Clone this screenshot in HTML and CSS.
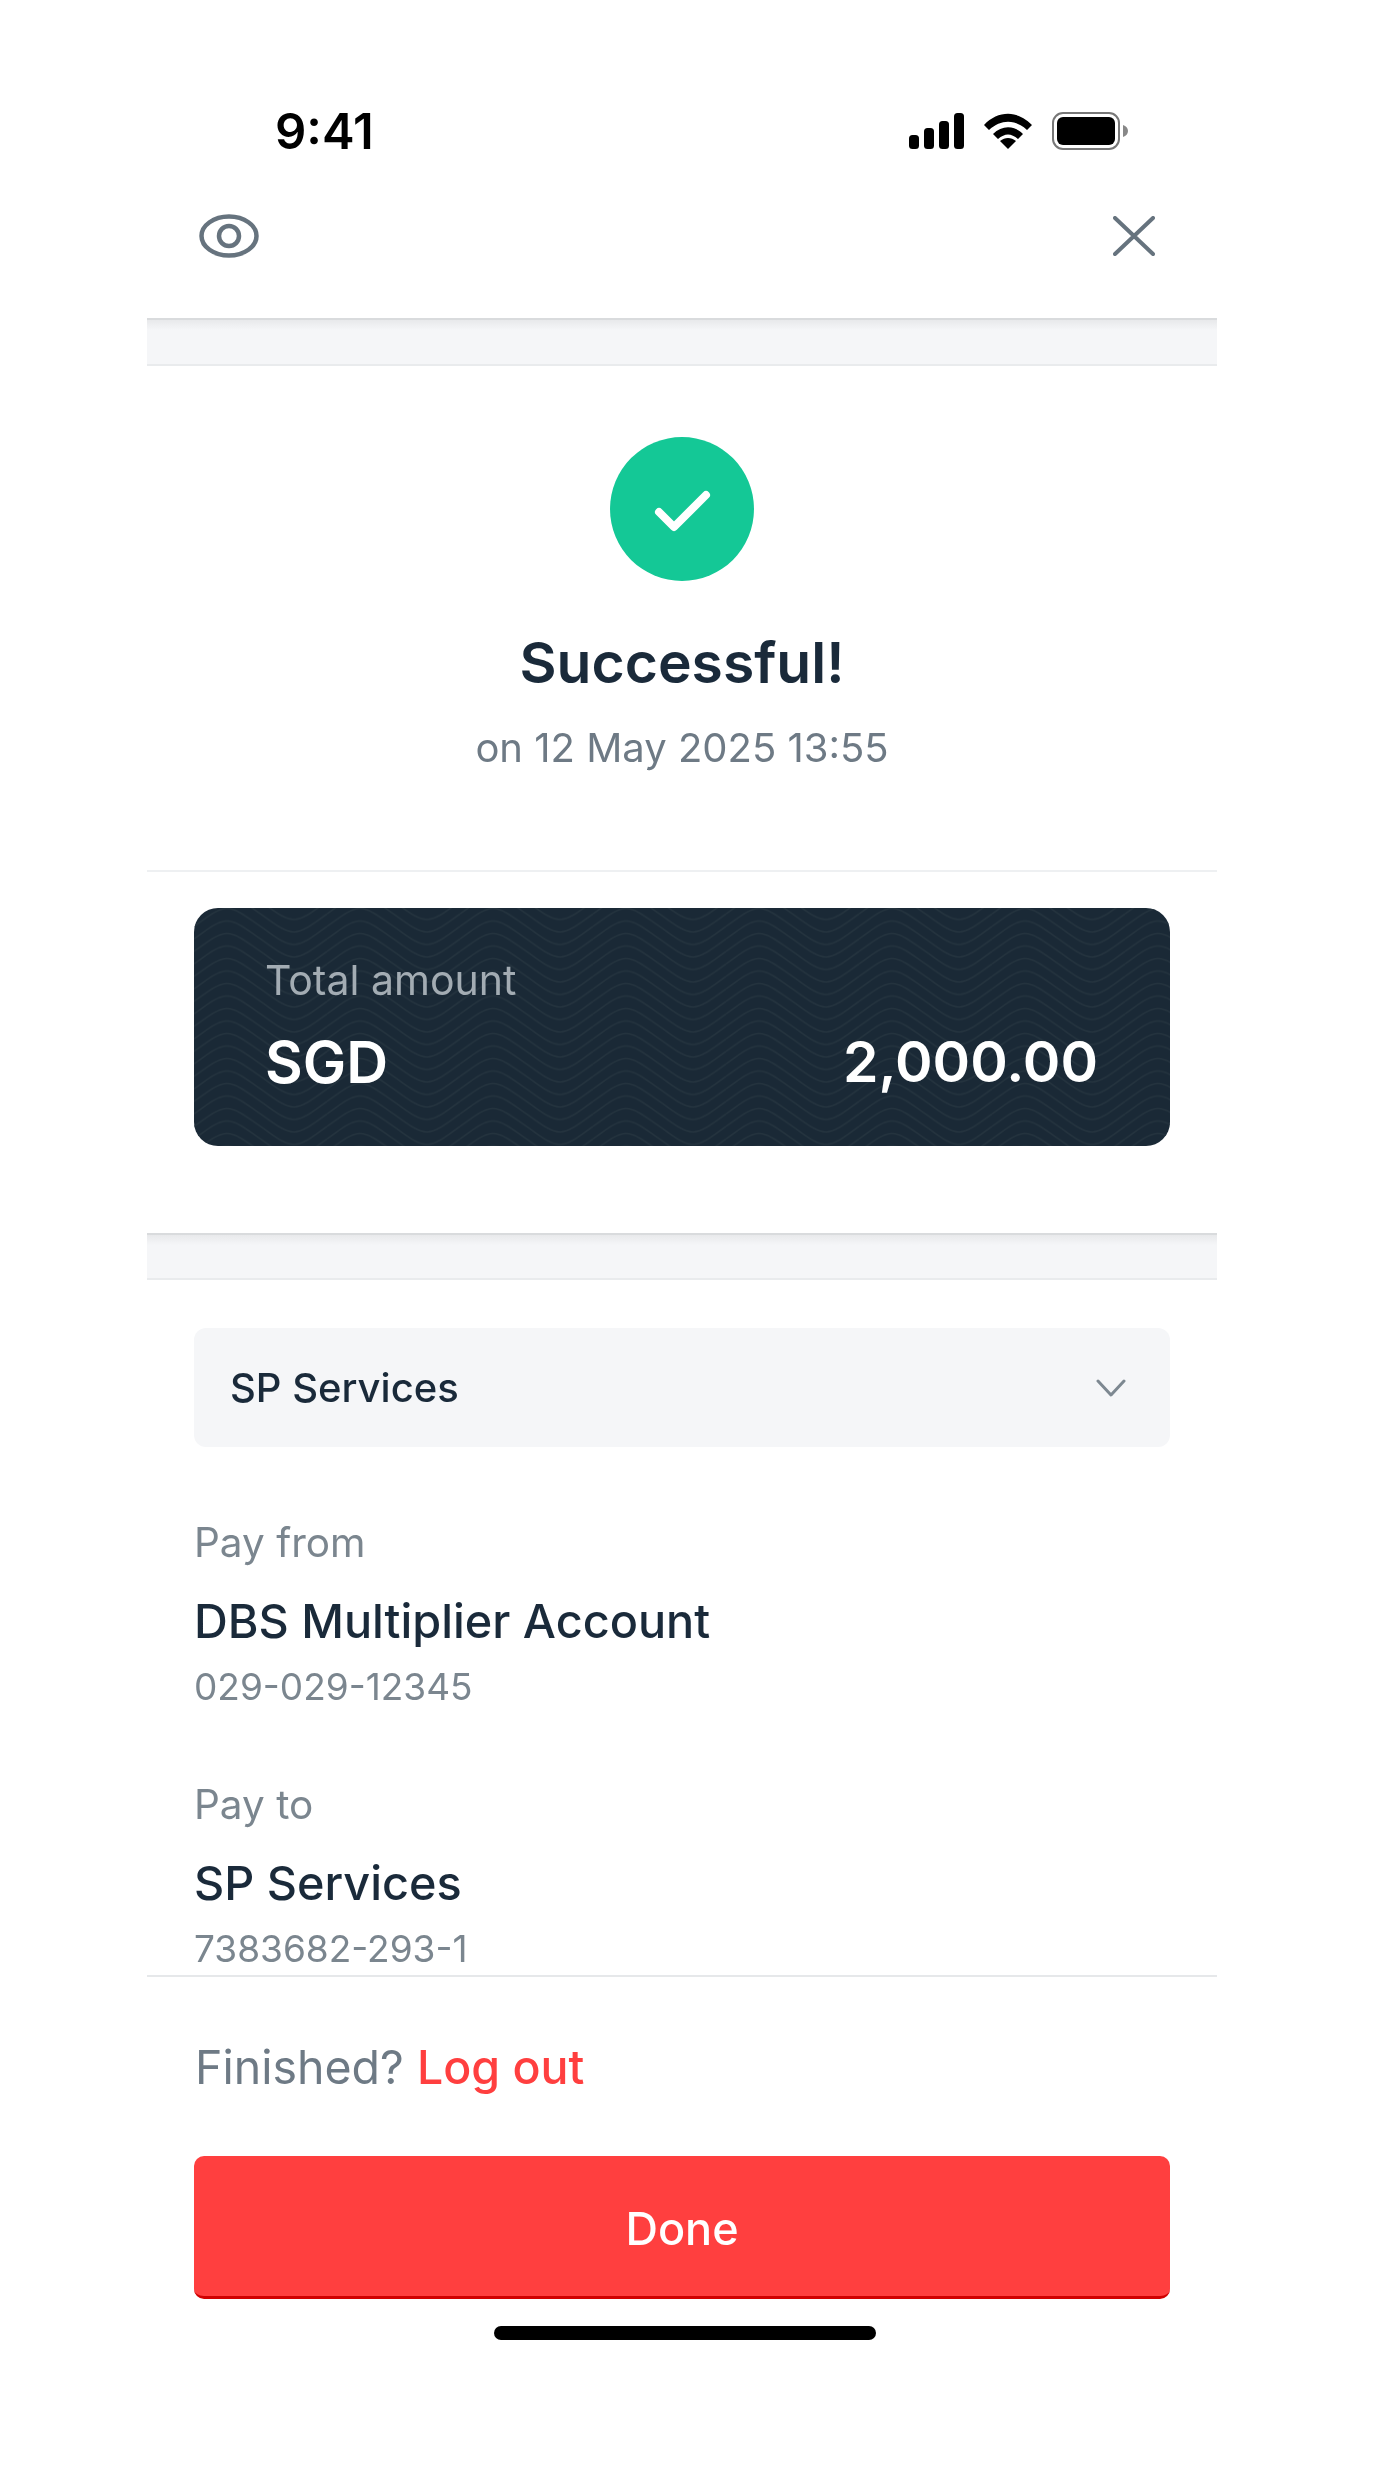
FILE: index.html
```html
<!DOCTYPE html>
<html lang="en">
<head>
    <meta charset="UTF-8">
    <meta name="viewport" content="width=device-width, initial-scale=1.0">
    <title>Payment successful</title>
    <link rel="stylesheet" href="styles.css">
</head>
<body>

<div class="phone">
    <div class="status-bar">
        <span class="time">9:41</span>
        <div class="status-icons">
            <svg width="55" height="36" viewBox="0 0 55 36">
                <rect x="0" y="22" width="10" height="14" rx="3.5"/>
                <rect x="15" y="15" width="10" height="21" rx="3.5"/>
                <rect x="30" y="8" width="10" height="28" rx="3.5"/>
                <rect x="45" y="0" width="10" height="36" rx="3.5"/>
            </svg>
            <svg width="48" height="36" viewBox="0 0 48 36">
                <path d="M0 12 C14 -3 34 -3 48 12 L43 17 C31 6 17 6 5 17 Z"/>
                <path d="M9 21 C18 12 30 12 39 21 L34 26 C27 20 21 20 14 26 Z"/>
                <path d="M16 28 C21 24 27 24 32 28 L24 36 Z"/>
            </svg>
            <svg width="76" height="38" viewBox="0 0 76 38">
                <rect x="1" y="1" width="66" height="36" rx="10" fill="none" stroke="#777" stroke-width="2"/>
                <rect x="5" y="5" width="58" height="28" rx="6"/>
                <path d="M71 13 C74 14 76 16 76 19 C76 22 74 24 71 25 Z" fill="#888"/>
            </svg>
        </div>
    </div>

    <div class="top-bar">
        <svg width="60" height="44" viewBox="0 0 60 44" fill="none" stroke="#66737e" stroke-width="4.5">
            <ellipse cx="30" cy="22" rx="27.5" ry="19.5"/>
            <circle cx="30" cy="22" r="10"/>
        </svg>
        <svg width="42" height="40" viewBox="0 0 42 40" fill="none" stroke="#66737e" stroke-width="4" stroke-linecap="round">
            <path d="M2 2 L40 38 M40 2 L2 38"/>
        </svg>
    </div>

    <div class="band"></div>

    <div class="success">
        <div class="check-circle">
            <svg width="57" height="46" viewBox="0 0 57 46" fill="none" stroke="#fff" stroke-width="8" stroke-linecap="round" stroke-linejoin="round">
                <path d="M5 26 L20 41 L52 9"/>
            </svg>
        </div>
        <h1>Successful!</h1>
        <p class="date">on 12 May 2025 13:55</p>
    </div>

    <div class="card-wrap">
        <div class="amount-card">
            <svg class="waves" width="976" height="238">
                <defs>
                    <pattern id="wave" width="133" height="12.5" patternUnits="userSpaceOnUse">
                        <path d="M0 6 C33 -18 33 -18 66.5 6 C100 30 100 30 133 6 M0 -6.5 C33 -30.5 33 -30.5 66.5 -6.5 C100 17.5 100 17.5 133 -6.5 M0 18.5 C33 -5.5 33 -5.5 66.5 18.5 C100 42.5 100 42.5 133 18.5 M0 31 C33 7 33 7 66.5 31 C100 55 100 55 133 31" fill="none" stroke="#24333e" stroke-width="1.5"/>
                    </pattern>
                </defs>
                <rect width="976" height="238" fill="url(#wave)"/>
            </svg>
            <div class="amount-label">Total amount</div>
            <div class="amount-row">
                <span>SGD</span>
                <span class="amount-value">2,000.00</span>
            </div>
        </div>
    </div>

    <div class="band band-second"></div>

    <div class="details">
        <div class="accordion">
            <span>SP Services</span>
            <svg width="30" height="20" viewBox="0 0 30 20" fill="none" stroke="#7d8891" stroke-width="3" stroke-linecap="round" stroke-linejoin="round">
                <path d="M2 3 L15 17 L28 3"/>
            </svg>
        </div>

        <div class="label first">Pay from</div>
        <div class="name">DBS Multiplier Account</div>
        <div class="number">029-029-12345</div>

        <div class="label second">Pay to</div>
        <div class="name">SP Services</div>
        <div class="number">7383682-293-1</div>
    </div>

    <div class="footer">
        <p class="finished">Finished? <a href="#">Log out</a></p>
        <button class="done">Done</button>
        <div class="home-bar"></div>
    </div>
</div>

</body>
</html>
```

FILE: styles.css
```css
body {
    margin: 0;
    background-color: white;
    font-family: 'Inter', 'Liberation Sans', sans-serif;
    color: #1a2a3a;
}
.phone {
    width: 1070px;
    margin-left: 147px;
    padding-top: 108px;
    filter: blur(0.6px);
}
.status-bar {
    height: 46px;
    display: flex;
    justify-content: space-between;
    align-items: center;
    padding: 0 89px 0 128px;
}
.time {
    font-size: 49px;
    font-weight: 600;
    color: #000;
}
.status-icons {
    display: flex;
    align-items: center;
    gap: 20px;
}
.top-bar {
    height: 164px;
    display: flex;
    justify-content: space-between;
    align-items: center;
    padding: 0 62px 0 52px;
}
.band {
    height: 44px;
    background: linear-gradient(#e8e9eb, #f5f6f8 10px);
    border-top: 2px solid #d9dbdd;
    border-bottom: 2px solid #e9ebed;
}
.band-second {
    margin-top: 87px;
    height: 43px;
}
.success {
    height: 506px;
    padding-top: 71px;
    box-sizing: border-box;
    border-bottom: 2px solid #eef0f2;
    display: flex;
    flex-direction: column;
    align-items: center;
}
.check-circle {
    width: 144px;
    height: 144px;
    border-radius: 50%;
    background-color: #14c896;
    display: flex;
    justify-content: center;
    align-items: center;
}
h1 {
    margin: 48px 0 0;
    font-size: 57px;
    line-height: 68px;
    font-weight: 600;
}
.date {
    margin: 25px 0 0;
    font-size: 40px;
    line-height: 52px;
    color: #6e7a85;
}
.card-wrap {
    padding: 36px 47px 0;
}
.amount-card {
    position: relative;
    height: 238px;
    box-sizing: border-box;
    padding: 47px 72px 0 71px;
    border-radius: 24px;
    background-color: #1a2936;
    overflow: hidden;
}
.waves {
    position: absolute;
    top: 0;
    left: 0;
}
.amount-label {
    position: relative;
    font-size: 41px;
    line-height: 50px;
    color: #a3acb3;
}
.amount-row {
    position: relative;
    display: flex;
    justify-content: space-between;
    margin-top: 24px;
    font-size: 58px;
    line-height: 66px;
    font-weight: 600;
    color: #fff;
}
.amount-value {
    font-size: 57px;
}
.details {
    padding: 48px 47px 0;
    height: 695px;
    box-sizing: border-box;
}
.accordion {
    height: 119px;
    box-sizing: border-box;
    padding: 0 44px 0 36px;
    border-radius: 12px;
    background-color: #f5f6f8;
    display: flex;
    justify-content: space-between;
    align-items: center;
    font-size: 40px;
    font-weight: 500;
}
.label {
    font-size: 40.5px;
    line-height: 50px;
    color: #7b868f;
}
.label.first {
    margin-top: 71px;
}
.label.second {
    margin-top: 68px;
}
.name {
    margin-top: 23px;
    font-size: 46.8px;
    line-height: 60px;
    font-weight: 500;
}
.number {
    margin-top: 11px;
    font-size: 37px;
    line-height: 50px;
    color: #7b868f;
}
.footer {
    padding: 60px 47px 0 48px;
    border-top: 2px solid #e6e8ea;
}
.finished {
    margin: 0;
    font-size: 46.5px;
    line-height: 60px;
    color: #6e7a85;
}
.finished a {
    color: #ff3f3f;
    text-decoration: none;
    font-weight: 500;
}
.done {
    display: block;
    width: 976px;
    height: 143px;
    margin: 58.5px 0 0 -1px;
    padding-top: 6px;
    border: none;
    border-bottom: 3px solid #d00000;
    border-radius: 10px;
    background-color: #ff3f3f;
    color: #fff;
    font-family: inherit;
    font-size: 45px;
    font-weight: 500;
}
.home-bar {
    width: 382px;
    height: 14px;
    margin: 27px 0 0 299px;
    border-radius: 7px;
    background-color: #000;
}
```
